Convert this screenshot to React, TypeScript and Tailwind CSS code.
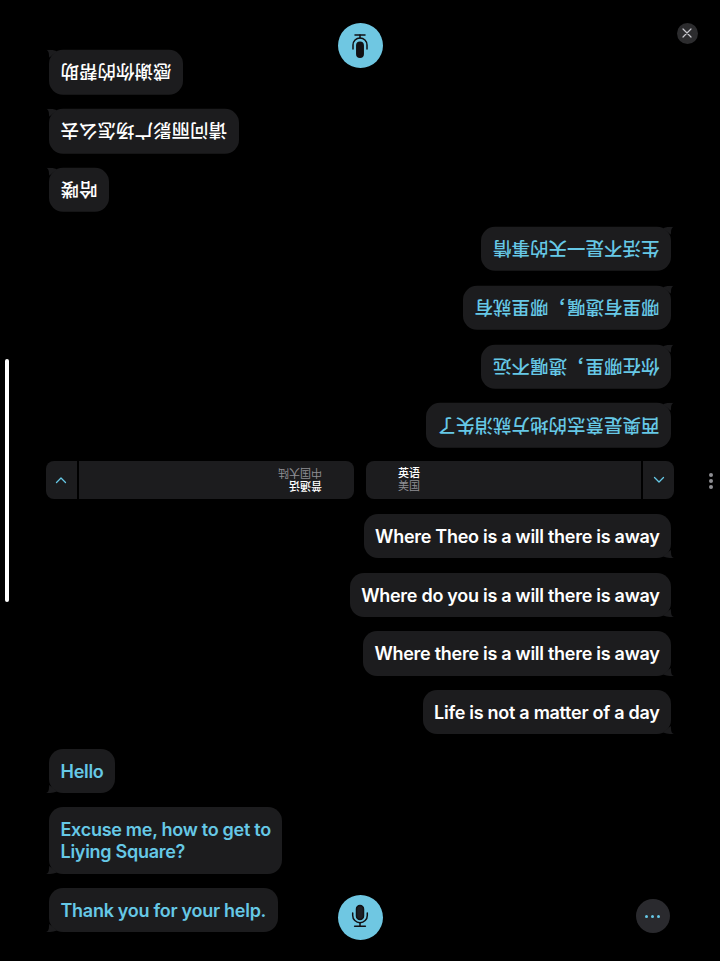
import React from "react";

const COMMA = "\uFF0C";

function Tail({ side }: { side: "left" | "right" }) {
  return side === "left" ? (
    <svg className="absolute bottom-0 left-[-3px] h-[8px] w-[11px]" viewBox="0 0 11 8">
      <path d="M0 8 C1.8 7.5 3 6 3 2.5 L3.2 0 L11 6.5 C7 8 3.5 8.2 0 8 Z" fill="#1c1c1e" />
    </svg>
  ) : (
    <svg className="absolute bottom-0 right-[-3px] h-[8px] w-[11px]" viewBox="0 0 11 8">
      <path d="M11 8 C9.2 7.5 8 6 8 2.5 L7.8 0 L0 6.5 C4 8 7.5 8.2 11 8 Z" fill="#1c1c1e" />
    </svg>
  );
}

function Bubble({ side, blue, cjk, children }: { side: "left" | "right"; blue?: boolean; cjk?: boolean; children: React.ReactNode }) {
  return (
    <div
      className={`relative rounded-[14px] bg-[#1c1c1e] px-[11.5px] leading-[22px] ${
        cjk ? "py-[11.25px] text-[18.5px] font-medium" : "pb-[10.5px] pt-[12px] text-[18px] font-semibold tracking-[-0.28px]"
      } ${side === "left" ? "self-start" : "self-end"} ${blue ? "text-[#66c8e6]" : "text-white"}`}
    >
      <span className="whitespace-pre">{children}</span>
      <Tail side={side} />
    </div>
  );
}

function Chevron() {
  return (
    <svg width="12" height="8" viewBox="0 0 12 8" fill="none" stroke="#66c8e6" strokeWidth="1.3" strokeLinecap="round" strokeLinejoin="round">
      <path d="M1.5 1.5 L6 6 L10.5 1.5" />
    </svg>
  );
}

function LanguagePill({ title, sub, rotated }: { title: string; sub: string; rotated?: boolean }) {
  return (
    <div className={`flex h-[38px] flex-1 overflow-hidden rounded-[8px] ${rotated ? "rotate-180" : ""}`}>
      <div className="flex flex-1 flex-col justify-center bg-[#1c1c1e] pl-[32px] pt-[1px] text-[11px] leading-[13px]">
        <span className="font-medium text-white">{title}</span>
        <span className="text-[#8e8e93]">{sub}</span>
      </div>
      <div className="ml-[2px] flex w-[31px] items-center justify-center bg-[#1c1c1e]">
        <Chevron />
      </div>
    </div>
  );
}

function MicIcon() {
  return (
    <svg width="24" height="28" viewBox="0 0 24 28" fill="none" stroke="#111114" strokeWidth="1.5" strokeLinecap="round">
      <rect x="8.5" y="2.4" width="7" height="14.2" rx="3.5" fill="#1d1f24" />
      <path d="M4.7 10 V12.4 A7.3 7.3 0 0 0 19.3 12.4 V10" />
      <path d="M12 20 V23" />
      <path d="M6.6 23.2 H17.4" />
    </svg>
  );
}

function FlippedMicIcon() {
  return (
    <svg width="24" height="28" viewBox="0 0 24 28" fill="none" stroke="#111114" strokeWidth="1.5" strokeLinecap="round">
      <rect x="8.8" y="1.8" width="6.4" height="15" rx="3.2" fill="#111114" />
      <path d="M5 10 V14 A7 7 0 0 0 19 14 V10" />
      <path d="M12 21 V24" />
      <path d="M7 24 H17" />
    </svg>
  );
}

export default function App() {
  return (
    <div className="relative flex h-[961px] w-[720px] flex-col overflow-hidden bg-black pt-[50px] font-['Inter','Noto_Sans_CJK_SC',sans-serif]">
      <div className="mx-[49px] flex rotate-180 flex-col gap-[14.4px]">
        <Bubble side="left" blue cjk>西奥是意志的地方就消失了</Bubble>
        <Bubble side="left" blue cjk>{`你在哪里${COMMA}遗嘱不远`}</Bubble>
        <Bubble side="left" blue cjk>{`哪里有遗嘱${COMMA}哪里就有`}</Bubble>
        <Bubble side="left" blue cjk>生活不是一天的事情</Bubble>
        <Bubble side="right" cjk>哈喽</Bubble>
        <Bubble side="right" cjk>请问丽影广场怎么去</Bubble>
        <Bubble side="right" cjk>感谢你的帮助</Bubble>
      </div>

      <div className="mt-[13px] flex gap-[12px] px-[46px]">
        <LanguagePill title="普通话" sub="中国大陆" rotated />
        <LanguagePill title="英语" sub="美国" />
      </div>

      <div className="mx-[49px] mt-[15px] flex flex-col gap-[14.2px]">
        <Bubble side="right">Where Theo is a will there is away</Bubble>
        <Bubble side="right">Where do you is a will there is away</Bubble>
        <Bubble side="right">Where there is a will there is away</Bubble>
        <Bubble side="right">Life is not a matter of a day</Bubble>
        <Bubble side="left" blue>Hello</Bubble>
        <Bubble side="left" blue>{"Excuse me, how to get to\nLiying Square?"}</Bubble>
        <Bubble side="left" blue>Thank you for your help.</Bubble>
      </div>

      <div className="absolute left-[337.5px] top-[22.5px] flex h-[45px] w-[45px] rotate-180 items-center justify-center rounded-full bg-[#6fc7e2]">
        <FlippedMicIcon />
      </div>
      <div className="absolute left-[337.5px] top-[894.5px] flex h-[45px] w-[45px] items-center justify-center rounded-full bg-[#6fc7e2]">
        <MicIcon />
      </div>

      <div className="absolute left-[676.5px] top-[22.5px] flex h-[21px] w-[21px] items-center justify-center rounded-full bg-[#2c2c2e]">
        <svg width="10" height="10" viewBox="0 0 10 10" stroke="#c7c7cc" strokeWidth="1.2" strokeLinecap="round">
          <path d="M1 1 L9 9 M9 1 L1 9" />
        </svg>
      </div>

      <div className="absolute left-[635.5px] top-[899px] flex h-[34px] w-[34px] items-center justify-center gap-[3px] rounded-full bg-[#2a2a2e]">
        <span className="h-[3px] w-[3px] rounded-full bg-[#66c8e6]" />
        <span className="h-[3px] w-[3px] rounded-full bg-[#66c8e6]" />
        <span className="h-[3px] w-[3px] rounded-full bg-[#66c8e6]" />
      </div>

      <div className="absolute left-[5px] top-[359px] h-[243px] w-[4px] rounded-full bg-white" />

      <div className="absolute left-[709px] top-[473px] flex flex-col gap-[2px]">
        <span className="h-[4px] w-[4px] rounded-full bg-[#8e8e93]" />
        <span className="h-[4px] w-[4px] rounded-full bg-[#8e8e93]" />
        <span className="h-[4px] w-[4px] rounded-full bg-[#8e8e93]" />
      </div>
    </div>
  );
}
